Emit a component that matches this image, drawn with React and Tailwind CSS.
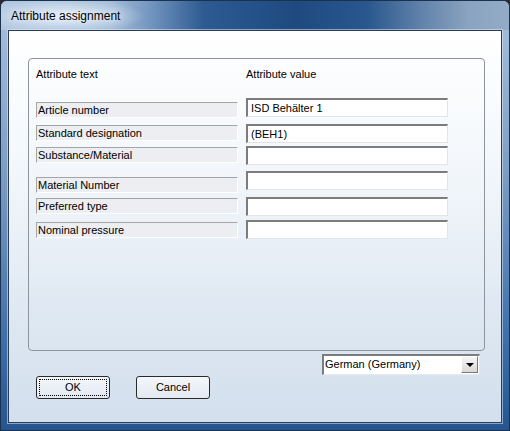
import React from "react";

const rows = [
  { label: "Article number", value: "ISD Behälter 1", row: "mt-[17px] h-[20px]", lab: "mt-[4px]" },
  { label: "Standard designation", value: "(BEH1)", row: "mt-[6px] h-[19px]", lab: "mt-[1px]" },
  { label: "Substance/Material", value: "", row: "mt-[3px] h-[19px]", lab: "mt-[1px]" },
  { label: "Material Number", value: "", row: "mt-[6px] h-[22px]", lab: "mt-[6px]" },
  { label: "Preferred type", value: "", row: "mt-[4px] h-[19px]", lab: "mt-[1px]" },
  { label: "Nominal pressure", value: "", row: "mt-[4px] h-[19px]", lab: "mt-[2px]" },
];

export default function App() {
  return (
    <div className="w-[510px] h-[431px] bg-[#2b2b2b] [font-family:'Liberation_Sans',Arial,sans-serif] text-[11px] text-black">
      <div className="relative w-full h-full rounded-t-[7px] border border-[#1b3150] flex flex-col overflow-hidden bg-[linear-gradient(180deg,#a9c1dc_0%,#7d9dc3_40%,#3f70aa_78%,#24558f_100%)]">
        <div className="h-[29px] shrink-0 flex items-center pl-[10px] bg-[image:radial-gradient(80px_18px_at_64px_15px,rgba(235,243,252,0.95),rgba(235,243,252,0)),linear-gradient(90deg,#b3c8e0_0%,#a2bbd8_22%,#6f92bd_30%,#2c5a91_40%,#1e4a80_58%,#29578d_72%,#6787ad_84%,#8aa3c0_92%,#93abc6_100%)]">
          <span className="text-[12px] leading-none [text-shadow:0_0_6px_rgba(255,255,255,0.9)]">Attribute assignment</span>
        </div>
        <div className="flex-1 mx-[7px] mb-[7px] border border-[#2a3d54] shadow-[0_0_0_1px_rgba(220,232,245,0.55)] bg-[linear-gradient(180deg,#ffffff_0%,#f3f7fb_35%,#dde7f2_75%,#d3dfed_100%)] flex flex-col">
          <div className="ml-[19px] mt-[27px] w-[457px] h-[293px] border border-[#8e949b] rounded-[4px] flex flex-col pl-[7px]">
            <div className="mt-[9px] flex h-[13px] leading-[13px]">
              <div className="w-[210px]">Attribute text</div>
              <div>Attribute value</div>
            </div>
            {rows.map((r) => (
              <div key={r.label} className={`flex items-start ${r.row}`}>
                <div className={`w-[202px] h-[16px] ${r.lab} border-t border-l border-[#a3a5a8] border-b border-r border-b-white border-r-white bg-[#eceef1] leading-[14px] pl-[1px] whitespace-nowrap`}>
                  {r.label}
                </div>
                <div className="ml-[8px] w-[202px] h-[19px] bg-white border-t-2 border-l-2 border-[#7c7c7c] border-b border-r border-b-[#e2e4e6] border-r-[#e2e4e6] leading-[16px] pl-[3px] whitespace-nowrap">
                  {r.value}
                </div>
              </div>
            ))}
          </div>
          <div className="mt-[3px] ml-[313px] w-[158px] h-[21px] bg-white border-t-2 border-l-2 border-[#7c7c7c] border-b border-r border-b-[#e8eaec] border-r-[#e8eaec] flex items-start">
            <div className="flex-1 pl-[1px] leading-[17px] whitespace-nowrap">German (Germany)</div>
            <div className="mr-[1px] w-[17px] h-[17px] border border-t-white border-l-white border-b-[#7a7a7a] border-r-[#7a7a7a] bg-[linear-gradient(180deg,#f6f6f6,#d8d8d8)] flex items-center justify-center">
              <div className="w-0 h-0 border-l-[4px] border-r-[4px] border-t-[4px] border-l-transparent border-r-transparent border-t-black" />
            </div>
          </div>
          <div className="mt-[1px] ml-[27px] flex gap-[26px]">
            <button className="w-[74px] h-[23px] rounded-[3px] border border-[#2a2a2a] bg-[linear-gradient(180deg,#f4f7fb,#e2e9f2)] p-[2px]">
              <div className="w-full h-full border border-dotted border-black rounded-[1px] flex items-center justify-center leading-none">OK</div>
            </button>
            <button className="w-[74px] h-[23px] rounded-[3px] border border-[#2a2a2a] bg-[linear-gradient(180deg,#f4f7fb,#e2e9f2)] flex items-center justify-center leading-none">
              Cancel
            </button>
          </div>
        </div>
      </div>
    </div>
  );
}
